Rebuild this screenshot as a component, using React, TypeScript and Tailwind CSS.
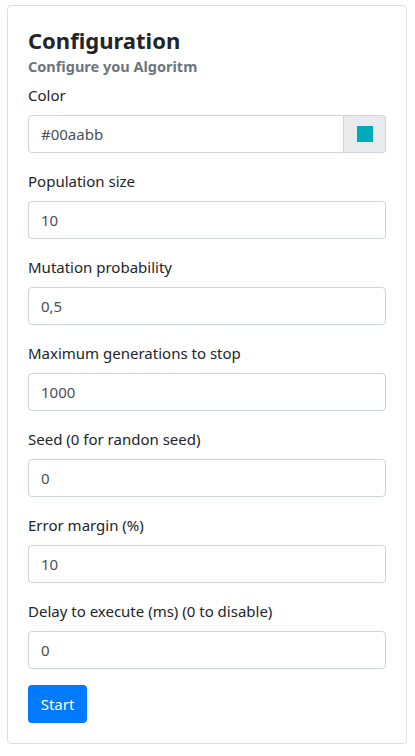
import React, { useState } from 'react';

interface Field {
  id: string;
  label: string;
  value: string;
}

const fields: Field[] = [
  { id: 'population', label: 'Population size', value: '10' },
  { id: 'mutation', label: 'Mutation probability', value: '0,5' },
  { id: 'generations', label: 'Maximum generations to stop', value: '1000' },
  { id: 'seed', label: 'Seed (0 for randon seed)', value: '0' },
  { id: 'error', label: 'Error margin (%)', value: '10' },
  { id: 'delay', label: 'Delay to execute (ms) (0 to disable)', value: '0' },
];

const App: React.FC = () => {
  const [color, setColor] = useState('#00aabb');
  const [values, setValues] = useState<Record<string, string>>(
    Object.fromEntries(fields.map((f) => [f.id, f.value]))
  );

  return (
    <div className="min-h-screen bg-white pt-[5px] pl-[7px] pr-[8px] font-['Noto_Sans',sans-serif] text-[#212529]">
      <div className="w-[400px] rounded border border-[#dfdfdf] p-5">
        <h4 className="text-[22px] leading-[29px] font-bold">Configuration</h4>
        <h6 className="mt-[2px] text-[14.5px] leading-[19px] font-bold text-[#6c757d]">Configure you Algoritm</h6>

        {/* Color */}
        <div className="mt-[7px] mb-4">
          <label className="block text-[15px] leading-6 mb-2">Color</label>
          <div className="flex">
            <input
              type="text"
              value={color}
              onChange={(e) => setColor(e.target.value)}
              className="h-[38px] flex-1 min-w-0 rounded-l border border-[#ced4da] px-3 text-[15px] text-[#495057] outline-none"
            />
            <div className="flex h-[38px] w-[42px] items-center justify-center rounded-r border border-l-0 border-[#ced4da] bg-[#e9ecef]">
              <span className="h-4 w-4" style={{ backgroundColor: color }} />
            </div>
          </div>
        </div>

        {fields.map((f) => (
          <div key={f.id} className="mb-4">
            <label htmlFor={f.id} className="block text-[15px] leading-6 mb-2">
              {f.label}
            </label>
            <input
              id={f.id}
              type="text"
              value={values[f.id]}
              onChange={(e) => setValues({ ...values, [f.id]: e.target.value })}
              className="block h-[38px] w-full rounded border border-[#ced4da] px-3 text-[15px] text-[#495057] outline-none"
            />
          </div>
        ))}

        <button
          type="button"
          className="h-[38px] w-[59px] rounded bg-[#007bff] text-[15px] text-white"
        >
          Start
        </button>
      </div>
    </div>
  );
};

export default App;
